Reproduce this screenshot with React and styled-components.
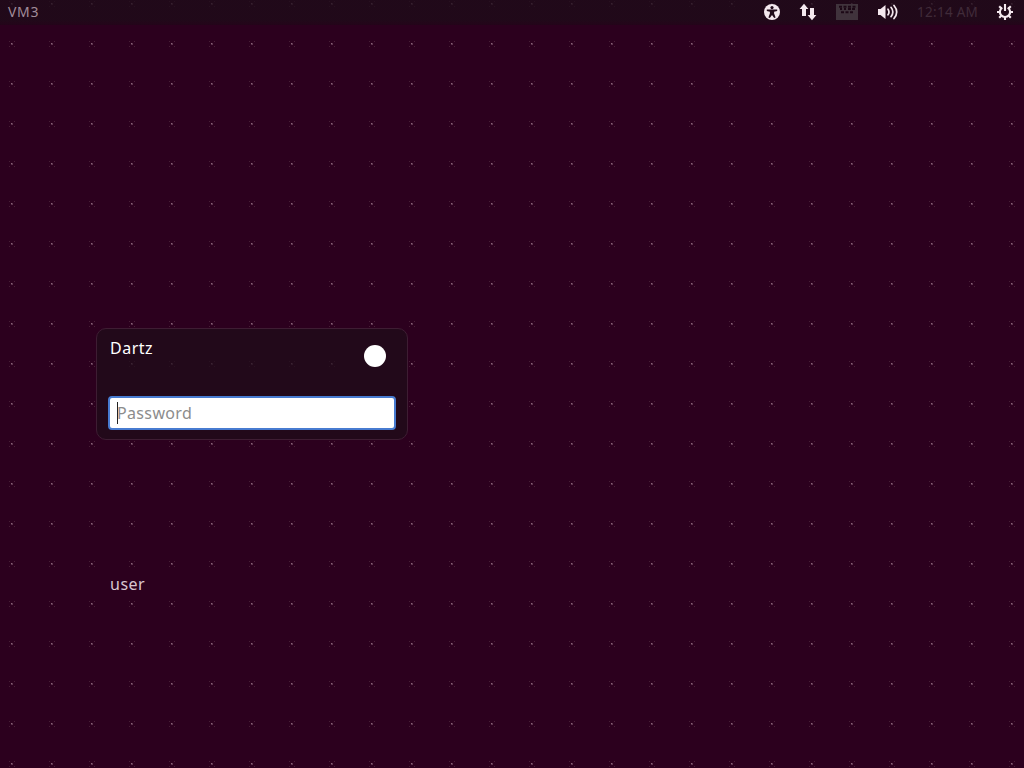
import React from 'react';
import styled, { createGlobalStyle } from 'styled-components';

const GlobalStyle = createGlobalStyle`
  * {
    box-sizing: border-box;
  }
  body {
    margin: 0;
    background: #2c001e;
  }
`;

const Screen = styled.div`
  display: flex;
  flex-direction: column;
  width: 1024px;
  height: 768px;
  overflow: hidden;
  color: #fff;
  font-family: "Noto Sans", "Open Sans", sans-serif;
  background-color: #2c001e;
  background-image:
    conic-gradient(from 90deg at 39px 39px, #8b657b 90deg, transparent 0),
    conic-gradient(from 90deg at 38px 38px, #5e354e 90deg, transparent 0),
    conic-gradient(from 90deg at 39px 39px, #471e35 90deg, transparent 0),
    conic-gradient(from 90deg at 39px 39px, #471e35 90deg, transparent 0),
    conic-gradient(from 90deg at 39px 39px, #471e35 90deg, transparent 0),
    conic-gradient(from 90deg at 39px 39px, #471e35 90deg, transparent 0);
  background-size: 40px 40px;
  background-position: 12px 4px, 13px 5px, 10px 2px, 15px 2px, 10px 7px, 15px 7px;
`;

const Panel = styled.header`
  display: flex;
  align-items: flex-start;
  height: 25px;
  padding: 0 10px 0 8px;
  background: linear-gradient(rgba(29, 12, 24, 0.76) 80%, rgba(31, 7, 23, 0.6));
`;

const Host = styled.span`
  font-size: 14px;
  line-height: 24px;
  letter-spacing: 0.7px;
  color: #a18c99;
`;

const Indicators = styled.div`
  display: flex;
  align-items: center;
  height: 24px;
  margin-left: auto;
  & > svg {
    display: block;
  }
`;

const Clock = styled.time`
  width: 61px;
  margin: 0 18px 0 19px;
  font-size: 13.5px;
  line-height: 24px;
  letter-spacing: 0.28px;
  white-space: nowrap;
  color: #402b39;
`;

const Spacer = styled.span`
  width: ${props => props.$size}px;
`;

const UserList = styled.main`
  display: flex;
  flex-direction: column;
  width: 312px;
  margin: 303px 0 0 96px;
`;

const PromptBox = styled.form`
  height: 112px;
  padding: 7px 11px 0;
  border: 1px solid #3e1d33;
  border-radius: 10px;
  background: rgba(30, 13, 25, 0.73);
`;

const PromptHeader = styled.div`
  display: flex;
  justify-content: space-between;
  height: 60px;
  padding: 0 10px 0 2px;
`;

const UserName = styled.span`
  font-size: 16px;
  line-height: 24px;
  letter-spacing: 0.5px;
  color: ${props => (props.$active ? '#fff' : '#d9c6d1')};
`;

const SessionBadge = styled.span`
  width: 22px;
  height: 22px;
  margin-top: 9px;
  border-radius: 50%;
  background: #fff;
`;

const PasswordField = styled.div`
  display: flex;
  align-items: center;
  height: 34px;
  padding-left: 7px;
  border: 2px solid #477bd0;
  border-radius: 4px;
  background: #fff;
`;

const Caret = styled.span`
  width: 1px;
  height: 22px;
  margin-right: -1px;
  background: #222;
`;

const Placeholder = styled.span`
  font-size: 16px;
  line-height: 24px;
  letter-spacing: 0.35px;
  color: #8c8c8c;
`;

const UserEntry = styled.div`
  margin-top: 132px;
  padding-left: 14px;
`;


const AccessibilityIcon = () => (
  <svg width="16" height="16" viewBox="0 0 16 16">
    <circle cx="8" cy="8" r="8" fill="#f4e8ee" />
    <circle cx="8" cy="3.6" r="1.6" fill="#210b1a" />
    <path d="M2.8 5.4h10.4v1.7l-3.1.7v1.7l1.5 3.9-1.4.6L8 11l-2.2 3-1.4-.6 1.5-3.9V7.8l-3.1-.7z" fill="#210b1a" />
  </svg>
);

const NetworkIcon = () => (
  <svg width="18" height="18" viewBox="0 0 18 18" fill="#f4e8ee">
    <path d="M5 .8 9.4 6H7v7H3V6H.6z" />
    <path d="M13 17.2 8.6 12H11V5h4v7h2.4z" />
  </svg>
);

const KeyboardIcon = () => (
  <svg width="24" height="16" viewBox="0 0 24 16">
    <path d="M1 0h22v16H1z" fill="#40333c" />
    <path d="M4 2.8h3m1.5 0h3m1.5 0h3m1.5 0h3M5 5h2m2 0h2m2 0h3m1 0h3M6 8.3h3m1.5 0h3m1.5 0h3" stroke="#1c0816" strokeWidth="1.9" />
  </svg>
);

const VolumeIcon = () => (
  <svg width="21" height="16" viewBox="0 0 21 16" fill="none" stroke="#f4e8ee" strokeWidth="1.7" strokeLinecap="round">
    <path d="M1 5h2.5l5-4v14l-5-4H1z" fill="#f4e8ee" stroke="none" />
    <path d="M11 5.2q2 2.8 0 5.6M14 3.3q3.7 4.7 0 9.4M17 1.5q5.4 6.5 0 13" />
  </svg>
);

const SystemIcon = () => (
  <svg width="18" height="18" viewBox="0 0 18 18" fill="none" stroke="#f4e8ee" strokeWidth="2.1">
    <path d="M6.3 4.6a5.1 5.1 0 1 0 5.4 0" />
    <path d="M9 1v7M1 9h3M14 9h3M9 14v3M3.2 3.2l2 2M14.8 3.2l-2 2M3.2 14.8l2-2M14.8 14.8l-2-2" />
  </svg>
);


class Greeter extends React.Component {
  render() {
    const { host, time, users } = this.props;
    const [active, ...others] = users;

    return (
      <Screen>
        <Panel>
          <Host>{host}</Host>
          <Indicators>
            <AccessibilityIcon />
            <Spacer $size={19} />
            <NetworkIcon />
            <Spacer $size={18} />
            <KeyboardIcon />
            <Spacer $size={18} />
            <VolumeIcon />
            <Clock>{time}</Clock>
            <SystemIcon />
          </Indicators>
        </Panel>
        <UserList>
          <PromptBox>
            <PromptHeader>
              <UserName $active>{active}</UserName>
              <SessionBadge />
            </PromptHeader>
            <PasswordField>
              <Caret />
              <Placeholder>Password</Placeholder>
            </PasswordField>
          </PromptBox>
          {others.map(name => (
            <UserEntry key={name}>
              <UserName>{name}</UserName>
            </UserEntry>
          ))}
        </UserList>
      </Screen>
    );
  }
}


export default function App() {
  return (
    <React.Fragment>
      <GlobalStyle />
      <Greeter host="VM3" time="12:14 AM" users={['Dartz', 'user']} />
    </React.Fragment>
  );
}
